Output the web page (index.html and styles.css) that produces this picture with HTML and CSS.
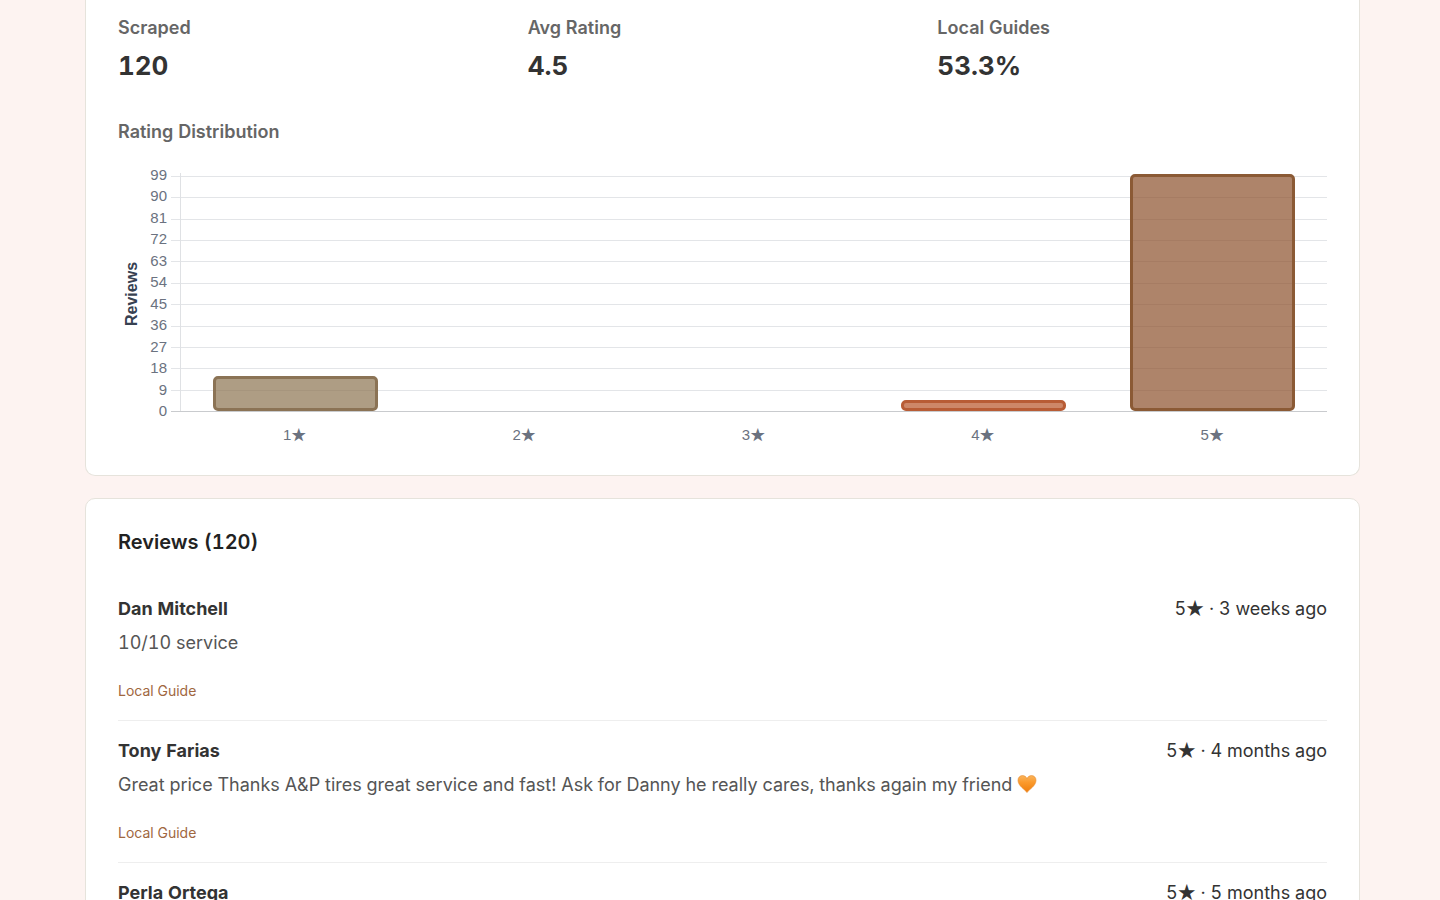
FILE: index.html
```html
<!DOCTYPE html>
<html lang="en">
<head>
    <meta charset="UTF-8">
    <meta name="viewport" content="width=device-width, initial-scale=1.0">
    <title>Reviews</title>
    <link rel="stylesheet" href="styles.css">
</head>
<body>

<main class="page">
    <section class="card summary">
        <div class="stats">
            <div class="stat">
                <div class="label">Scraped</div>
                <div class="value">120</div>
            </div>
            <div class="stat">
                <div class="label">Avg Rating</div>
                <div class="value">4.5</div>
            </div>
            <div class="stat">
                <div class="label">Local Guides</div>
                <div class="value">53.3%</div>
            </div>
        </div>

        <h3 class="label">Rating Distribution</h3>
        <div class="chart">
            <div class="axis-title">Reviews</div>
            <div class="ticks">
                <span>99</span>
                <span>90</span>
                <span>81</span>
                <span>72</span>
                <span>63</span>
                <span>54</span>
                <span>45</span>
                <span>36</span>
                <span>27</span>
                <span>18</span>
                <span>9</span>
                <span>0</span>
            </div>
            <div class="lines">
                <i></i><i></i><i></i><i></i><i></i><i></i>
                <i></i><i></i><i></i><i></i><i></i><i></i>
            </div>
            <div class="bars">
                <div class="bar one" style="height: 14.6%"></div>
                <div class="bar none"></div>
                <div class="bar none"></div>
                <div class="bar four" style="height: 4.7%"></div>
                <div class="bar five" style="height: 99.4%"></div>
            </div>
            <div class="stars">
                <span>1<b class="star">★</b></span>
                <span>2<b class="star">★</b></span>
                <span>3<b class="star">★</b></span>
                <span>4<b class="star">★</b></span>
                <span>5<b class="star">★</b></span>
            </div>
        </div>
    </section>

    <section class="card">
        <h2>Reviews (120)</h2>

        <article class="review">
            <div class="review-head">
                <strong>Dan Mitchell</strong>
                <span>5<b class="star">★</b> · 3 weeks ago</span>
            </div>
            <p>10/10 service</p>
            <div class="guide">Local Guide</div>
        </article>

        <article class="review">
            <div class="review-head">
                <strong>Tony Farias</strong>
                <span>5<b class="star">★</b> · 4 months ago</span>
            </div>
            <p>Great price Thanks A&amp;P tires great service and fast! Ask for Danny he really cares, thanks again my friend
                <svg class="heart" viewBox="0 0 20 20" role="img" aria-label="orange heart">
                    <defs>
                        <linearGradient id="orange" x1="0" y1="0" x2="0" y2="1">
                            <stop offset="0" stop-color="#f9b45c"/>
                            <stop offset="0.4" stop-color="#fb9a2c"/>
                            <stop offset="1" stop-color="#ee7d0c"/>
                        </linearGradient>
                    </defs>
                    <path fill="url(#orange)" stroke="#e58a2e" stroke-width="0.6" d="M10 18.5C8.5 16 1 12 1 6.3 1 3.5 3 1.6 5.5 1.6 7.6 1.6 9.3 2.8 10 4.8 10.7 2.8 12.4 1.6 14.5 1.6 17 1.6 19 3.5 19 6.3 19 12 11.5 16 10 18.5Z"/>
                </svg>
            </p>
            <div class="guide">Local Guide</div>
        </article>

        <article class="review">
            <div class="review-head">
                <strong>Perla Ortega</strong>
                <span>5<b class="star">★</b> · 5 months ago</span>
            </div>
        </article>
    </section>
</main>

</body>
</html>
```

FILE: styles.css
```css
* {
    box-sizing: border-box;
}
body {
    margin: 0;
    height: 100vh;
    overflow: hidden;
    background-color: #fdf3f1;
    color: #333;
    font-family: Inter, sans-serif;
    font-size: 18px;
    font-variant-numeric: tabular-nums;
    line-height: 28px;
}
.page {
    padding: 0 80px 0 85px;
}
.card {
    background-color: #fff;
    border: 1px solid #e6e3dc;
    border-radius: 10px;
    padding: 28px 32px;
    margin-bottom: 22px;
}
.summary {
    border-top: none;
    border-radius: 0 0 10px 10px;
    padding-top: 14px;
    padding-bottom: 30px;
}
.stats {
    display: grid;
    grid-template-columns: repeat(3, 1fr);
    gap: 20px;
    margin-bottom: 32px;
}
.label {
    margin: 0;
    color: #666;
    font-size: 18px;
    font-weight: 600;
    line-height: 28px;
}
.value {
    margin-top: 4px;
    color: #333;
    font-size: 26px;
    font-weight: 700;
    line-height: 40px;
}

/* chart */
.chart {
    display: grid;
    grid-template-columns: 27px 22px 13px 1fr;
    grid-template-rows: 236px auto;
    margin-top: 30px;
    font-family: "Liberation Sans", Arial, sans-serif;
    font-size: 15px;
    line-height: 20px;
    color: #6b7280;
}
.axis-title {
    grid-column: 1;
    grid-row: 1;
    writing-mode: vertical-rl;
    transform: rotate(180deg);
    text-align: center;
    color: #374151;
    font-size: 16px;
    font-weight: 700;
    line-height: 28px;
}
.ticks {
    grid-column: 2;
    grid-row: 1;
    display: flex;
    flex-direction: column;
    justify-content: space-between;
    margin: -11px 0 -9px;
    text-align: right;
}
.lines {
    grid-column: 3 / 5;
    grid-row: 1;
    display: flex;
    flex-direction: column;
    justify-content: space-between;
    margin-left: 4px;
}
.lines i {
    height: 1px;
    background-color: #e3e5e8;
}
.lines i:last-child {
    background-color: #c9cbce;
}
.bars {
    grid-column: 4;
    grid-row: 1;
    display: grid;
    grid-template-columns: repeat(5, 1fr);
    align-items: end;
    justify-items: center;
    margin: -3px 0 1px;
    border-left: 1px solid #dfe1e4;
}
.bar {
    width: 72%;
    border: 3px solid;
    border-radius: 5px;
}
.none {
    border: none;
}
.one {
    background-color: rgba(139, 115, 80, 0.7);
    border-color: #8b7355;
}
.four {
    background-color: rgba(184, 84, 40, 0.7);
    border-color: #b85c35;
}
.five {
    background-color: rgba(139, 80, 43, 0.7);
    border-color: #8b5a35;
}
.stars {
    grid-column: 4;
    grid-row: 2;
    display: grid;
    grid-template-columns: repeat(5, 1fr);
    padding-top: 13px;
    text-align: center;
}
.star {
    font-family: "Noto Sans CJK JP", sans-serif;
    font-weight: 400;
    line-height: 1;
}

/* reviews */
h2 {
    margin: 0 0 22px;
    color: #222;
    font-size: 20px;
    font-weight: 600;
    line-height: 30px;
}
.review {
    padding: 16px 0 15px;
    border-bottom: 1px solid #eee;
}
.review-head {
    display: flex;
    justify-content: space-between;
}
.review p {
    margin: 6px 0 20px;
    color: #555;
}
.heart {
    width: 20px;
    height: 20px;
    vertical-align: -3px;
}
.guide {
    color: #a0673f;
    font-size: 14px;
}
```
